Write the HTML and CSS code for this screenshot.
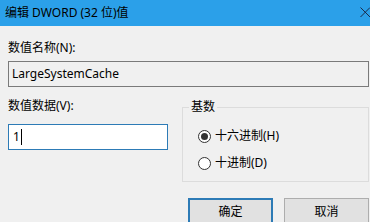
FILE: index.html
```html
<!DOCTYPE html>
<html lang="zh-CN">
<head>
    <meta charset="UTF-8">
    <title>编辑 DWORD (32 位)值</title>
    <link rel="stylesheet" href="styles.css">
</head>
<body>
    <div class="dialog">
        <div class="titlebar">
            <span class="title">编辑 DWORD (32 位)值</span>
            <svg class="close" width="10" height="10" viewBox="0 0 10 10">
                <path d="M0.5 0.5 L10 10 M10 0.5 L0.5 10" stroke="#1b2b4b" stroke-width="1" fill="none"/>
            </svg>
        </div>
        <div class="content">
            <div class="label">数值名称(N):</div>
            <div class="field readonly">LargeSystemCache</div>

            <div class="row">
                <div class="col">
                    <div class="label">数值数据(V):</div>
                    <div class="field focused">1<span class="caret"></span></div>
                </div>
                <fieldset class="group">
                    <legend>基数</legend>
                    <div class="option"><span class="radio checked"></span>十六进制(H)</div>
                    <div class="option"><span class="radio"></span>十进制(D)</div>
                </fieldset>
            </div>

            <div class="buttons">
                <button class="btn default">确定</button>
                <button class="btn">取消</button>
            </div>
        </div>
    </div>
</body>
</html>
```

FILE: styles.css
```css
body {
    margin: 0;
    width: 370px;
    height: 222px;
    overflow: hidden;
    background-color: #f0f0f0;
    font-family: "Noto Sans", "Noto Sans CJK SC", sans-serif;
    font-size: 12px;
    color: #000;
}
.titlebar {
    height: 26px;
    background-color: #2ba0e9;
    display: flex;
    align-items: center;
    justify-content: space-between;
    padding-left: 5px;
}
.title {
    line-height: 16px;
}
.close {
    display: block;
    margin-top: -3px;
}
.content {
    padding: 14px 0 0 8px;
    width: 361px;
}
.label {
    line-height: 16px;
}
.field {
    height: 26px;
    box-sizing: border-box;
    border: 1px solid #7a7a7a;
    padding-left: 3px;
    display: flex;
    align-items: center;
    line-height: 16px;
}
.readonly {
    margin-top: 5px;
    background-color: #f0f0f0;
}
.focused {
    margin-top: 10px;
    background-color: #fff;
    border-color: #2d7bb6;
    padding-left: 4px;
}
.caret {
    display: inline-block;
    width: 1px;
    height: 16px;
    background-color: #000;
    margin-left: 1px;
}
.row {
    display: flex;
    gap: 14px;
    margin-top: 11px;
}
.col {
    width: 160px;
}
.group {
    flex: 1;
    min-width: 0;
    margin: 1px 0 0 0;
    padding: 0 0 10px 6px;
    border: 1px solid #dcdcdc;
}
.group legend {
    padding: 0 2px;
    line-height: 16px;
}
.option {
    display: flex;
    align-items: center;
    line-height: 16px;
    margin: 11px 0 0 9px;
}
.option:first-of-type {
    margin-top: 13px;
}
.radio {
    width: 13px;
    height: 13px;
    box-sizing: border-box;
    border: 1px solid #333;
    border-radius: 50%;
    background-color: #fff;
    margin-right: 4px;
    position: relative;
}
.radio.checked::after {
    content: "";
    position: absolute;
    left: 2px;
    top: 2px;
    width: 7px;
    height: 7px;
    border-radius: 50%;
    background-color: #333;
}
.buttons {
    display: flex;
    gap: 11px;
    margin: 16px 0 0 180px;
}
.btn {
    width: 85px;
    height: 26px;
    box-sizing: border-box;
    border: 1px solid #adadad;
    background-color: #e1e1e1;
    font-family: inherit;
    font-size: 12px;
    color: #000;
    padding: 0;
}
.btn.default {
    border: 2px solid #2d7bb6;
}
```
